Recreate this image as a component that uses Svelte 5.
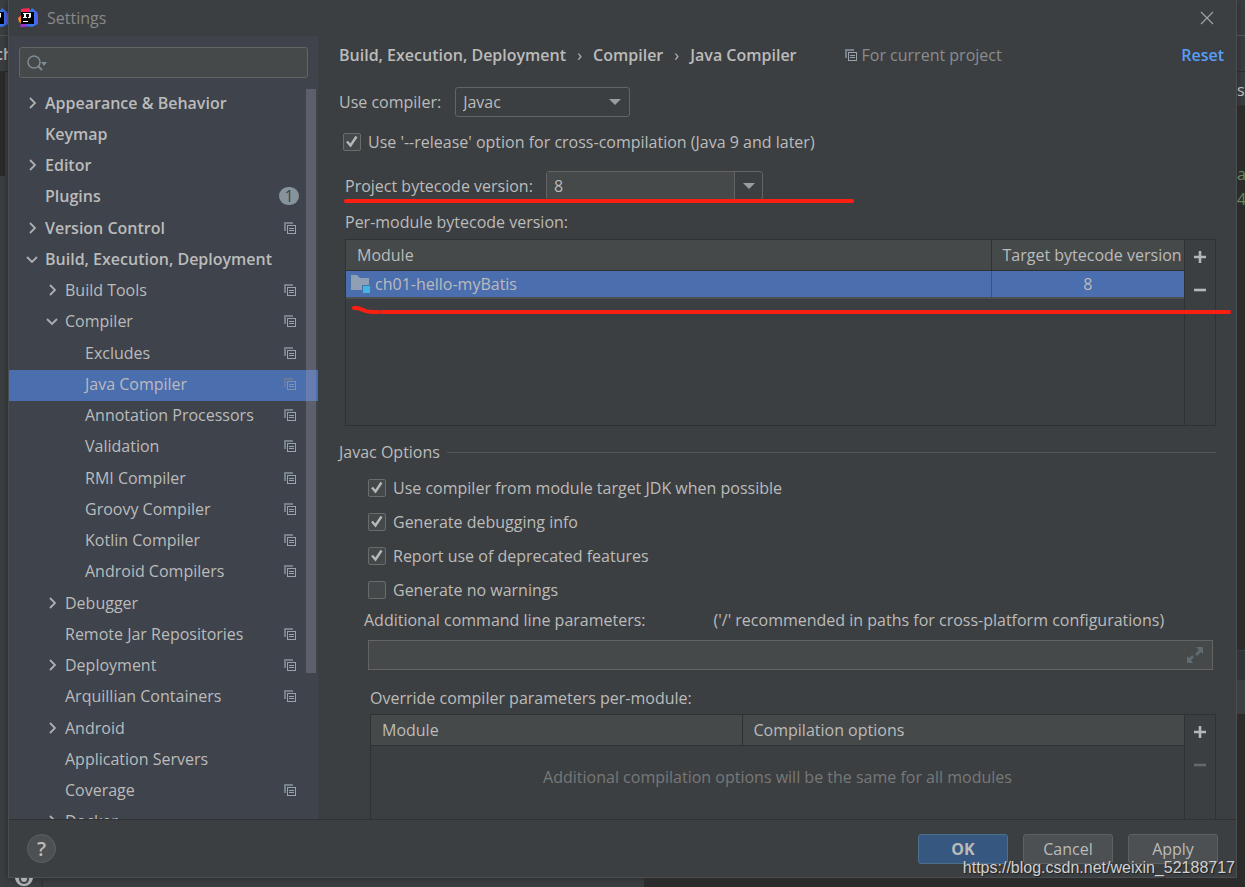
<script>
	let tree = [
		{ name: "Appearance & Behavior", level: 0, arrow: "right" },
		{ name: "Keymap", level: 0 },
		{ name: "Editor", level: 0, arrow: "right" },
		{ name: "Plugins", level: 0, badge: 1 },
		{ name: "Version Control", level: 0, arrow: "right", project: true },
		{ name: "Build, Execution, Deployment", level: 0, arrow: "down" },
		{ name: "Build Tools", level: 1, arrow: "right", project: true },
		{ name: "Compiler", level: 1, arrow: "down", project: true },
		{ name: "Excludes", level: 2, project: true },
		{ name: "Java Compiler", level: 2, project: true },
		{ name: "Annotation Processors", level: 2, project: true },
		{ name: "Validation", level: 2, project: true },
		{ name: "RMI Compiler", level: 2, project: true },
		{ name: "Groovy Compiler", level: 2, project: true },
		{ name: "Kotlin Compiler", level: 2, project: true },
		{ name: "Android Compilers", level: 2, project: true },
		{ name: "Debugger", level: 1, arrow: "right" },
		{ name: "Remote Jar Repositories", level: 1, project: true },
		{ name: "Deployment", level: 1, arrow: "right", project: true },
		{ name: "Arquillian Containers", level: 1, project: true },
		{ name: "Android", level: 1, arrow: "right" },
		{ name: "Application Servers", level: 1 },
		{ name: "Coverage", level: 1, project: true },
		{ name: "Docker", level: 1, arrow: "right" }
	];

	let selected = "Java Compiler";
	let search = "";

	let compiler = "Javac";
	let release = true;
	let bytecode = "8";
	let parameters = "";

	let options = [
		{ label: "Use compiler from module target JDK when possible", checked: true },
		{ label: "Generate debugging info", checked: true },
		{ label: "Report use of deprecated features", checked: true },
		{ label: "Generate no warnings", checked: false }
	];

	let modules = [{ name: "ch01-hello-myBatis", target: "8" }];
</script>

{#snippet projectIcon()}
	<svg class="project-icon" width="12" height="12" viewBox="0 0 12 12" aria-hidden="true">
		<path d="M0 0h9v2H2v7H0z" fill="#75808a" />
		<path d="M3 3h9v9H3z M4 4v7h7V4z" fill="#98a3ab" fill-rule="evenodd" />
		<path d="M5 6h5v1H5z M5 8h5v1H5z" fill="#98a3ab" />
	</svg>
{/snippet}

{#snippet logo()}
	<svg class="logo" width="20" height="20" viewBox="0 0 20 20" aria-hidden="true">
		<path d="M3 1l8-1 2 6-9 5-4-1 3-3z" fill="#fe2857" />
		<path d="M0 10l4-2v8l-3-2z" fill="#fc801d" />
		<path d="M2 19l2-7 8 5-4 2z" fill="#9d2fc9" />
		<path d="M11 4l3-4 5 4 1 4v8l-6 3-6-1z" fill="#3b74ea" />
		<path d="M17 3l3 3v9l-3 2z" fill="#5b5de8" />
		<path d="M3 4h13v12H3z" fill="#000" />
		<path d="M5 5h4v1H8v3h1v1H5V9h1V6H5z M9 5h4v4l-1 1h-2V9h1V6H9z M5 13h5v1H5z" fill="#fff" />
	</svg>
{/snippet}

{#snippet toolbar(disabled)}
	<div class="toolbar">
		<button aria-label="Add">
			<svg width="14" height="14" viewBox="0 0 14 14"><path d="M7 1v12M1 7h12" stroke="#b4b7b9" stroke-width="2.6" /></svg>
		</button>
		<button aria-label="Remove" {disabled}>
			<svg width="14" height="14" viewBox="0 0 14 14"><path d="M1 7h12" stroke="#b4b7b9" stroke-width="2.6" /></svg>
		</button>
	</div>
{/snippet}

{#snippet tick()}
	<svg width="18" height="18" viewBox="0 0 18 18" aria-hidden="true">
		<path d="M4 8.500l3.500 4 6-9" fill="none" stroke="#b6b8b9" stroke-width="2.400" />
	</svg>
{/snippet}

<div class="ide">
	<div class="edge left">
		<div class="edge-title">{@render logo()}</div>
		<div class="edge-path">ch</div>
		<div class="edge-dark"></div>
	</div>

	<div class="dialog">
		<header class="titlebar">
			{@render logo()}
			<span>Settings</span>
			<button class="close" aria-label="Close">
				<svg width="14" height="14" viewBox="0 0 14 14"><path d="M1 1l12 12M13 1L1 13" stroke="#a0a3a4" stroke-width="1.2" /></svg>
			</button>
		</header>

		<div class="content">
			<aside>
				<label class="search">
					<svg width="22" height="18" viewBox="0 0 22 18" aria-hidden="true">
						<circle cx="7" cy="8" r="6" fill="none" stroke="#7f8b91" stroke-width="1.5" />
						<path d="M11 12l4 4" stroke="#7f8b91" stroke-width="2" />
						<path d="M14 8h6l-3 4z" fill="#7f8b91" />
					</svg>
					<input bind:value={search} aria-label="Search settings" />
				</label>

				<div class="tree-box">
					<ul class="tree">
						{#each tree as item}
							<li>
								<button
									class="item level{item.level}"
									class:selected={selected === item.name}
									on:click={() => (selected = item.name)}
								>
									<span class="arrow">
										{#if item.arrow}
											<svg class={item.arrow} width="14" height="12" viewBox="0 0 14 12" aria-hidden="true">
												<path d="M5 1l5 5-5 5" fill="none" stroke="#adafb1" stroke-width="1.8" />
											</svg>
										{/if}
									</span>
									<span class="name">{item.name}</span>
									{#if item.badge}
										<span class="badge">{item.badge}</span>
									{/if}
									{#if item.project}
										{@render projectIcon()}
									{/if}
								</button>
							</li>
						{/each}
					</ul>
					<div class="scrollbar"></div>
				</div>
			</aside>

			<main>
				<nav class="crumbs">
					<b>Build, Execution, Deployment</b>
					<i>›</i>
					<b>Compiler</b>
					<i>›</i>
					<b>Java Compiler</b>
					<span class="scope">{@render projectIcon()} For current project</span>
					<a href="#reset">Reset</a>
				</nav>

				<div class="compiler-row">
					<label for="compiler">Use compiler:</label>
					<div class="select">
						<select id="compiler" bind:value={compiler}>
							<option>Javac</option>
							<option>Eclipse</option>
						</select>
						<svg width="12" height="6" viewBox="0 0 12 6" aria-hidden="true"><path d="M0 0h12L6 6z" fill="#9a9da0" /></svg>
					</div>
				</div>

				<label class="check release">
					<span class="box">
						<input type="checkbox" bind:checked={release} />
						{#if release}{@render tick()}{/if}
					</span>
					Use '--release' option for cross-compilation (Java 9 and later)
				</label>

				<div class="bytecode-row">
					<label for="bytecode">Project bytecode version:</label>
					<div class="combo">
						<input id="bytecode" bind:value={bytecode} />
						<button aria-label="Show versions">
							<svg width="12" height="6" viewBox="0 0 12 6"><path d="M0 0h12L6 6z" fill="#9a9da0" /></svg>
						</button>
					</div>
					<div class="marker"></div>
				</div>

				<p class="caption">Per-module bytecode version:</p>

				<div class="panel modules">
					<div class="grid">
						<table>
							<thead>
								<tr><th>Module</th><th class="target">Target bytecode version</th></tr>
							</thead>
							<tbody>
								{#each modules as module}
									<tr>
										<td>
											<span class="module">
												<svg width="20" height="18" viewBox="0 0 20 18" aria-hidden="true">
													<path d="M0 0h6l3 3h9v7h-7v5H0z" fill="#8fa0b5" />
													<path d="M12 11h7v7h-7z" fill="#40b6e0" />
												</svg>
												{module.name}
											</span>
										</td>
										<td class="value">{module.target}</td>
									</tr>
								{/each}
							</tbody>
						</table>
					</div>
					{@render toolbar(false)}
					<div class="marker wide">
						<svg width="28" height="8" viewBox="0 0 28 8" aria-hidden="true">
							<path d="M2 2C10 1 9 6 20 6H28" fill="none" stroke="#fb1f12" stroke-width="4" stroke-linecap="round" />
						</svg>
						<span></span>
					</div>
				</div>

				<h2>Javac Options</h2>

				<div class="options">
					{#each options as option}
						<label class="check">
							<span class="box">
								<input type="checkbox" bind:checked={option.checked} />
								{#if option.checked}{@render tick()}{/if}
							</span>
							{option.label}
						</label>
					{/each}
				</div>

				<div class="params-label">
					<label for="params">Additional command line parameters:</label>
					<span>('/' recommended in paths for cross-platform configurations)</span>
				</div>

				<div class="params">
					<input id="params" bind:value={parameters} />
					<button aria-label="Expand">
						<svg width="16" height="16" viewBox="0 0 16 16">
							<path d="M9 0h7v7l-2-2-4 4-2-2 4-4z M0 9l2 2 3-3 2 2-3 3 2 3H0z" fill="#606b70" />
						</svg>
					</button>
				</div>

				<p class="caption override">Override compiler parameters per-module:</p>

				<div class="panel overrides">
					<div class="grid">
						<table>
							<thead>
								<tr><th class="module-col">Module</th><th>Compilation options</th></tr>
							</thead>
						</table>
						<p class="empty">Additional compilation options will be the same for all modules</p>
					</div>
					{@render toolbar(true)}
				</div>
			</main>
		</div>

		<footer>
			<button class="help" aria-label="Help">?</button>
			<button class="action primary">OK</button>
			<button class="action">Cancel</button>
			<button class="action">Apply</button>
		</footer>
	</div>

	<div class="edge right">
		<div class="edge-title"></div>
		<div class="edge-path"></div>
		<div class="edge-tab">st</div>
		<div class="edge-code">
			<span>a</span>
			<span>4</span>
		</div>
		<div class="edge-tool"></div>
		<div class="edge-tail"></div>
	</div>

	<div class="edge bottom">
		<div class="eye">
			<svg width="18" height="9" viewBox="0 0 18 9" aria-hidden="true">
				<path d="M0 0h18c-2 11-16 11-18 0z" fill="#adb0b2" />
				<circle cx="9" cy="1" r="5" fill="#3c3f41" />
				<circle cx="9" cy="1" r="3" fill="#adb0b2" />
			</svg>
		</div>
		<div class="console"></div>
		<div class="console dark"></div>
	</div>

	<div class="watermark">https://blog.csdn.net/weixin_52188717</div>
</div>

<style>
	:global(body) {
		margin: 0;
		background: #2b2b2b;
	}

	.ide {
		position: relative;
		display: grid;
		grid-template-columns: 8px minmax(0, 1fr) 8px;
		grid-template-rows: minmax(0, 1fr) 9px;
		height: 100vh;
		overflow: hidden;
		background: #3c3f41;
		color: #bbbbbb;
		font-family: "Open Sans", "Noto Sans", sans-serif;
		font-size: 16px;
		line-height: 22px;
	}

	.ide * {
		box-sizing: border-box;
	}

	button,
	input,
	select {
		margin: 0;
		padding: 0;
		border: none;
		background: none;
		color: inherit;
		font: inherit;
	}

	svg {
		display: block;
		flex: none;
	}

	p {
		margin: 0;
	}

	/* main window showing around the dialog */
	.edge {
		display: flex;
		flex-direction: column;
		overflow: hidden;
	}

	.edge-title {
		display: flex;
		justify-content: flex-end;
		align-items: center;
		height: 36px;
		border-bottom: 1px solid #515354;
	}

	.edge-path {
		display: flex;
		justify-content: center;
		align-items: center;
		height: 36px;
		border-bottom: 1px solid #2b2b2b;
		font-weight: 600;
	}

	.edge-dark {
		width: 5px;
		height: 104px;
		background: #2b2b2b;
	}

	.edge-tab {
		height: 34px;
		border-bottom: 1px solid #323232;
		line-height: 36px;
	}

	.edge-code {
		display: flex;
		flex-direction: column;
		height: 544px;
		padding-top: 56px;
		background: #2b2b2b;
		color: #6a8759;
		line-height: 25px;
	}

	.edge-tool {
		height: 30px;
		border-top: 1px solid #3c3f41;
		background: #313335;
	}

	.edge-tail {
		flex: 1;
		border-top: 34px solid #3c3f41;
		background: #2b2b2b;
	}

	.bottom {
		grid-column: 1 / 4;
		flex-direction: row;
	}

	.eye {
		width: 43px;
		padding-left: 15px;
		border-right: 2px solid #323232;
	}

	.console {
		flex: 1;
	}

	.console.dark {
		background: #2b2b2b;
	}

	.dialog {
		display: flex;
		flex-direction: column;
		border: 1px solid #4b4e50;
		border-top: none;
		background: #3c3f41;
		box-shadow: 0 0 8px rgba(0, 0, 0, 0.4);
	}

	.titlebar {
		display: flex;
		align-items: center;
		gap: 9px;
		height: 36px;
		padding: 0 22px 0 9px;
		color: #88898a;
	}

	.close {
		margin-left: auto;
	}

	.content {
		flex: 1;
		display: flex;
		min-height: 0;
		overflow: hidden;
		border-bottom: 1px solid #2f3132;
	}

	aside {
		display: flex;
		flex-direction: column;
		width: 309px;
		background: #3e434c;
	}

	.search {
		display: flex;
		align-items: center;
		gap: 4px;
		height: 31px;
		margin: 11px 10px;
		padding: 0 7px;
		border: 1px solid #646464;
		border-radius: 3px;
		background: #45494a;
	}

	.search input {
		flex: 1;
		min-width: 0;
	}

	input:focus,
	select:focus {
		outline: none;
	}

	.tree-box {
		position: relative;
		flex: 1;
		min-height: 0;
		overflow: hidden;
	}

	.tree {
		margin: 0;
		padding: 0;
		list-style: none;
	}

	.tree li {
		height: 31px;
	}

	.tree li:nth-child(4n) {
		height: 32px;
	}

	.item {
		display: flex;
		align-items: center;
		width: 100%;
		height: 31px;
		padding: 0 22px 3px 16px;
		text-align: left;
	}

	.level0 {
		padding-right: 19px;
		font-weight: 600;
	}

	.level0 .project-icon {
		margin-right: 3px;
	}

	.level1 {
		padding-left: 36px;
	}

	.level2 {
		padding-left: 56px;
	}

	.arrow {
		width: 20px;
	}

	.down {
		transform: rotate(90deg);
	}

	.name {
		flex: 1;
		white-space: nowrap;
	}

	.selected {
		background: #4b6eaf;
	}

	.selected .project-icon {
		opacity: 0.7;
	}

	.badge {
		width: 20px;
		height: 18px;
		border-radius: 9px;
		background: #87939a;
		color: #3e434c;
		font-weight: 400;
		line-height: 18px;
		text-align: center;
	}

	.scrollbar {
		position: absolute;
		top: 0;
		right: 2px;
		width: 10px;
		height: 80%;
		background: rgba(166, 166, 176, 0.3);
	}

	main {
		flex: 1;
		min-width: 0;
		padding: 8px 20px 0 21px;
	}

	.crumbs {
		display: flex;
		align-items: center;
		height: 22px;
		margin-right: -8px;
		white-space: nowrap;
	}

	.crumbs b {
		font-weight: 600;
	}

	.crumbs i {
		width: 27px;
		font-style: normal;
		text-align: center;
	}

	.scope {
		display: flex;
		align-items: center;
		gap: 5px;
		margin-left: 48px;
		color: #8a8c8d;
	}

	.crumbs a {
		margin-left: auto;
		color: #589df6;
		font-weight: 600;
		text-decoration: none;
	}

	.compiler-row {
		display: flex;
		align-items: center;
		gap: 14px;
		margin-top: 21px;
	}

	.select {
		display: grid;
		align-items: center;
		width: 175px;
		height: 30px;
		border: 1px solid #646464;
		border-radius: 3px;
	}

	.select select,
	.select svg {
		grid-area: 1 / 1;
	}

	.select select {
		height: 28px;
		padding-left: 7px;
		appearance: none;
	}

	.select svg {
		justify-self: end;
		margin-right: 8px;
		pointer-events: none;
	}

	.check {
		display: flex;
		align-items: center;
		gap: 7px;
	}

	.box {
		display: grid;
		width: 18px;
		height: 18px;
	}

	.box input,
	.box svg {
		grid-area: 1 / 1;
	}

	.box input {
		width: 18px;
		height: 18px;
		border: 1px solid #6b6b6b;
		border-radius: 2px;
		background: #43494a;
		appearance: none;
	}

	.box svg {
		pointer-events: none;
	}

	.release {
		margin: 14px 0 18px 4px;
	}

	.bytecode-row {
		position: relative;
		display: flex;
		align-items: center;
		height: 29px;
		padding-left: 6px;
	}

	.bytecode-row label {
		width: 201px;
	}

	.combo {
		display: flex;
		width: 217px;
		height: 29px;
		border: 1px solid #646464;
		border-radius: 3px;
	}

	.combo input {
		flex: 1;
		min-width: 0;
		padding-left: 7px;
		background: #45494a;
	}

	.combo button {
		display: grid;
		place-items: center;
		width: 28px;
		border-left: 1px solid #646464;
	}

	.marker {
		position: absolute;
		bottom: -3px;
		left: 5px;
		width: 510px;
		height: 4px;
		border-radius: 2px;
		background: #fb1f12;
	}

	.caption {
		margin: 11px 0 6px 6px;
	}

	.panel {
		position: relative;
		display: flex;
		border: 1px solid #2f3132;
	}

	.modules {
		height: 187px;
		margin-left: 6px;
	}

	.grid {
		flex: 1;
		min-width: 0;
	}

	table {
		width: 100%;
		border-collapse: collapse;
		table-layout: fixed;
	}

	th {
		height: 30px;
		padding: 0 0 0 11px;
		border-bottom: 1px solid #2f3132;
		background: #45494a;
		font-weight: 400;
		text-align: left;
		white-space: nowrap;
	}

	th + th {
		border-left: 1px solid #2f3132;
	}

	.target {
		width: 193px;
	}

	.module-col {
		width: 371px;
	}

	td {
		height: 28px;
		padding: 0;
		border-bottom: 2px solid #4d5051;
		background: #4b6eaf;
	}

	td + td {
		border-left: 1px solid #4d5051;
	}

	.module {
		display: flex;
		align-items: center;
		gap: 4px;
		padding-left: 5px;
	}

	.value {
		text-align: center;
	}

	.toolbar {
		display: flex;
		flex-direction: column;
		width: 31px;
		border-left: 1px solid #2f3132;
	}

	.toolbar button {
		display: grid;
		place-items: center;
		height: 33px;
	}

	.toolbar button:disabled {
		opacity: 0.35;
	}

	.marker.wide {
		top: 66px;
		right: -16px;
		bottom: auto;
		left: 6px;
		display: flex;
		width: auto;
		height: 8px;
		background: none;
	}

	.marker.wide span {
		flex: 1;
		height: 4px;
		margin-top: 4px;
		border-radius: 2px;
		background: #fb1f12;
	}

	h2 {
		display: flex;
		align-items: center;
		gap: 7px;
		margin: 15px 0 14px;
		font-size: 16px;
		font-weight: 400;
	}

	h2::after {
		flex: 1;
		height: 1px;
		background: #515658;
		content: "";
	}

	.options {
		display: flex;
		flex-direction: column;
		gap: 12px;
		padding-left: 29px;
	}

	.params-label {
		display: flex;
		gap: 68px;
		margin: 8px 0 9px 25px;
		white-space: nowrap;
	}

	.params {
		display: flex;
		align-items: center;
		height: 30px;
		margin: 0 3px 0 29px;
		padding-right: 9px;
		border: 1px solid #646464;
		background: #45494a;
	}

	.params input {
		flex: 1;
		padding-left: 6px;
	}

	.override {
		margin: 17px 0 5px 31px;
	}

	.overrides {
		height: 188px;
		margin-left: 31px;
	}

	.empty {
		padding-top: 20px;
		color: #777879;
		text-align: center;
	}

	footer {
		display: flex;
		align-items: center;
		gap: 15px;
		height: 57px;
		padding: 0 18px;
	}

	.help {
		width: 29px;
		height: 29px;
		margin-right: auto;
		border: 1px solid #5e6060;
		border-radius: 50%;
		background: #4c5052;
		font-size: 20px;
		font-weight: 600;
	}

	.action {
		width: 90px;
		height: 30px;
		border: 1px solid #5e6060;
		border-radius: 3px;
		background: #4c5052;
	}

	.primary {
		border-color: #4c708c;
		background: #365880;
		font-weight: 700;
	}

	.watermark {
		position: absolute;
		right: 10px;
		bottom: 8px;
		color: #d0d1d2;
		font-family: "Liberation Sans", Arial, sans-serif;
		font-size: 16px;
		text-shadow: 1px 1px 1px rgba(0, 0, 0, 0.5);
	}
</style>
